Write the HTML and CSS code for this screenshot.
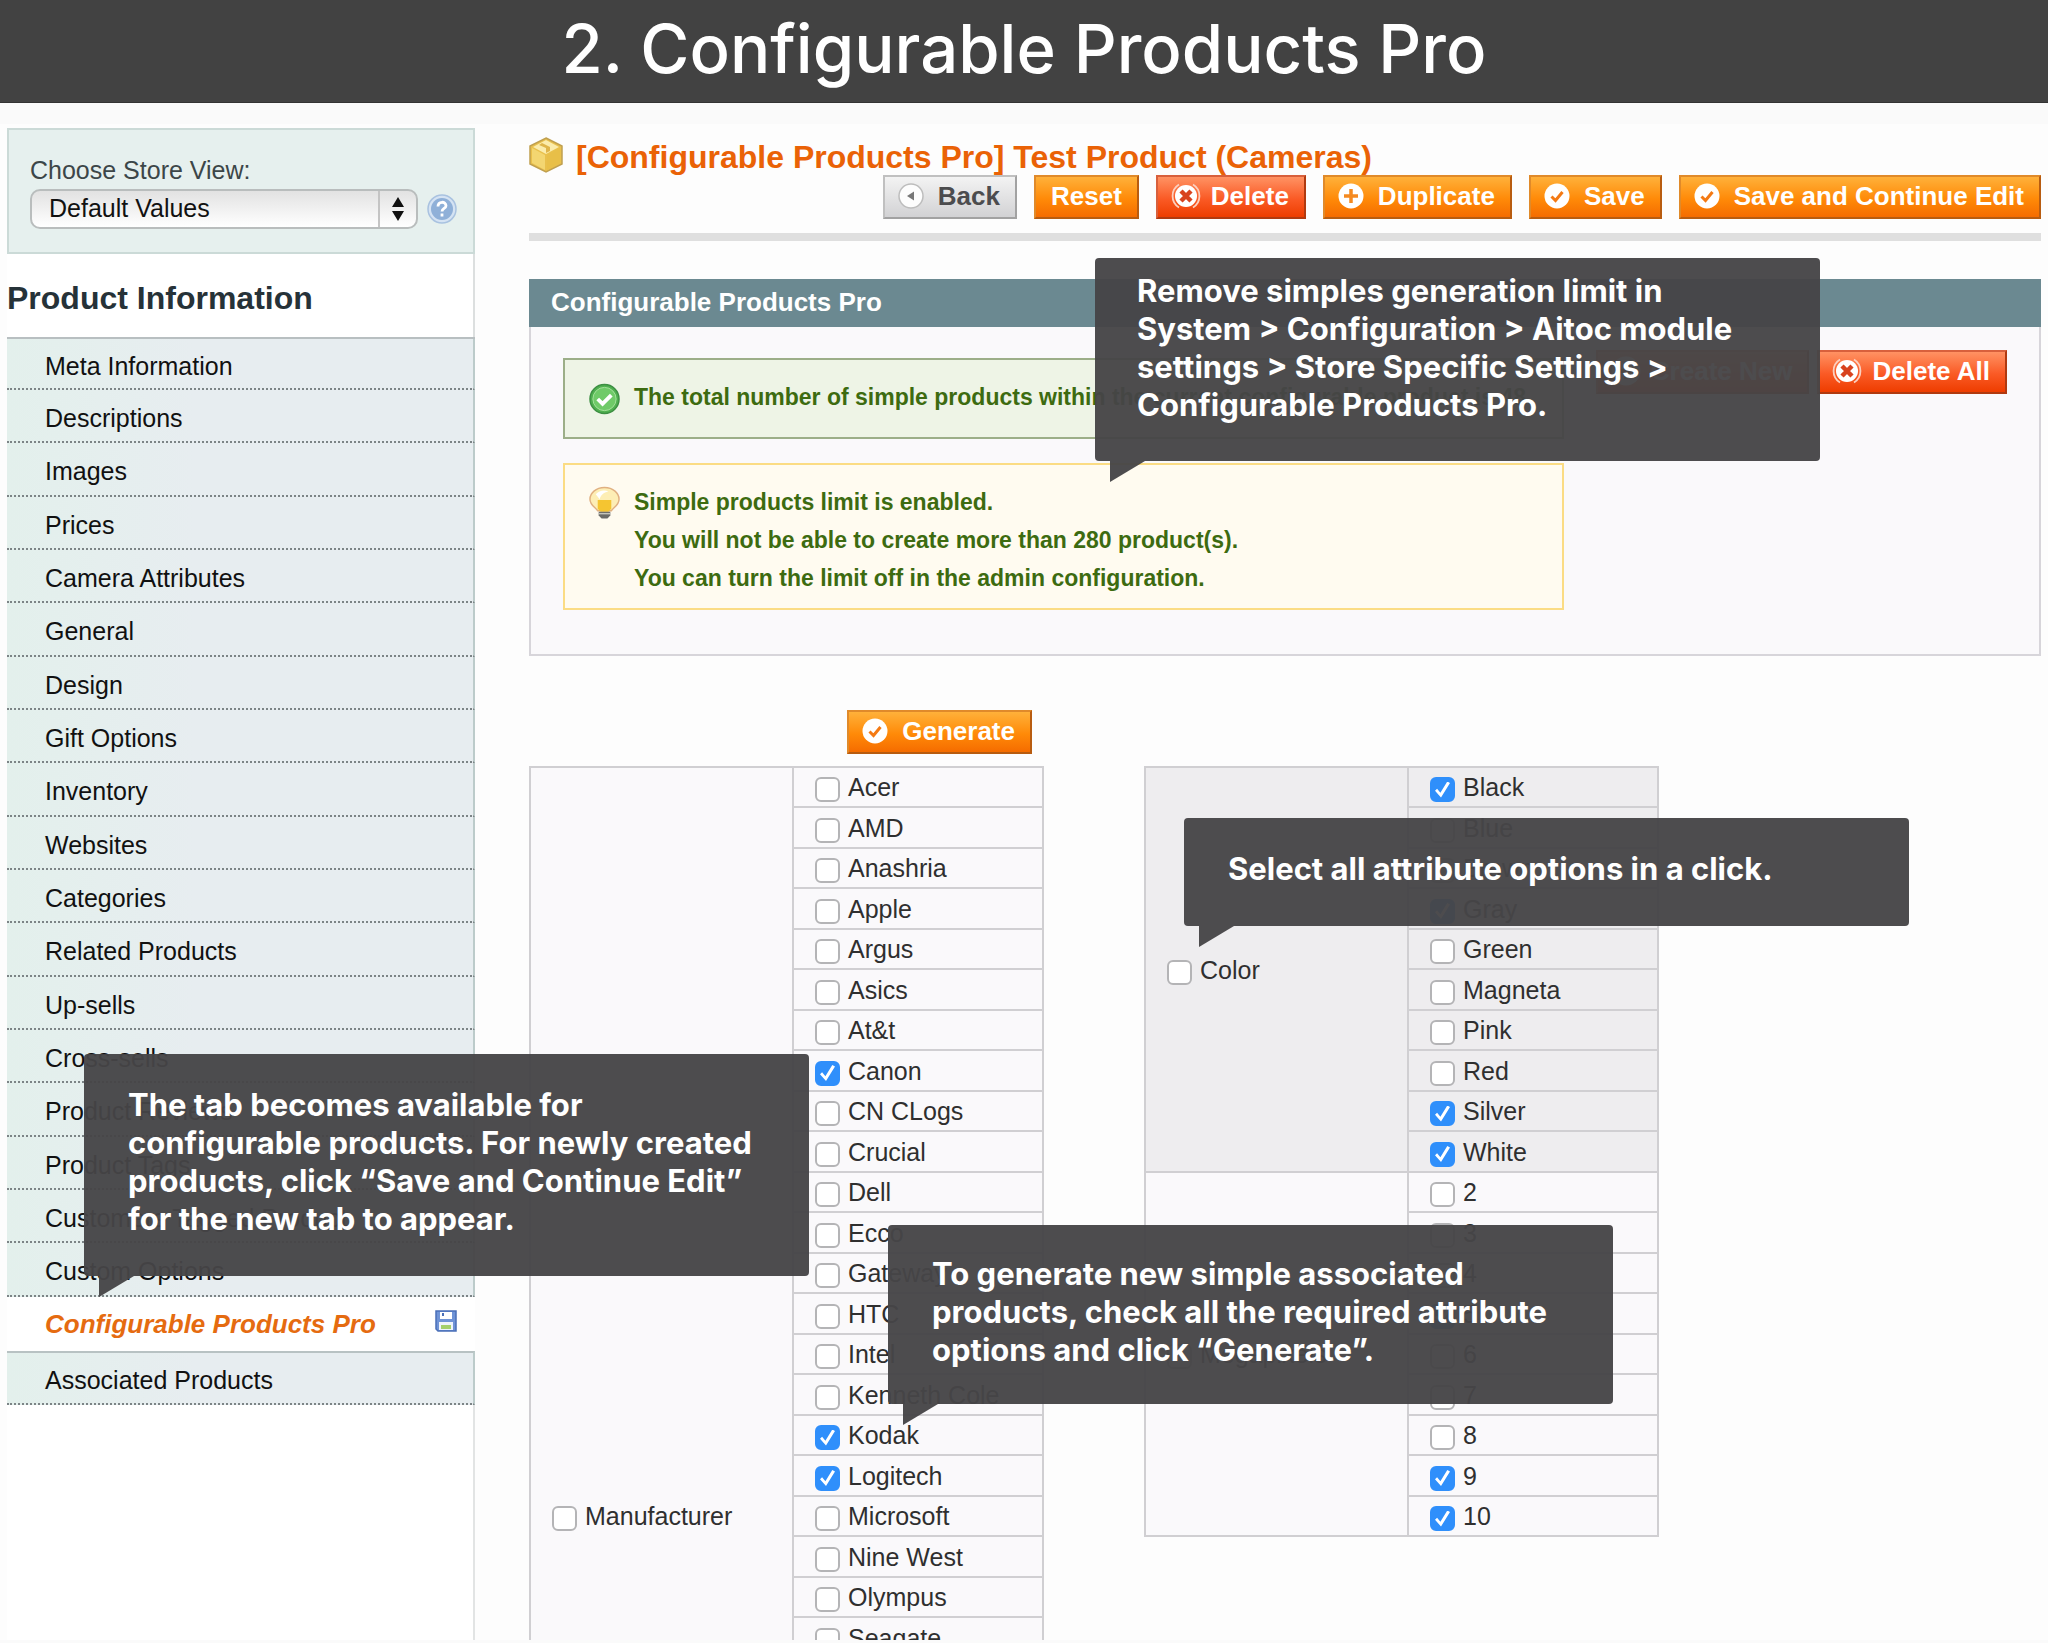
FILE: index.html
```html
<!DOCTYPE html>
<html lang="en">
<head>
<meta charset="utf-8">
<title>Configurable Products Pro</title>
<link rel="stylesheet" href="styles.css">
</head>
<body>
<svg class="sprite" width="0" height="0" aria-hidden="true">
  <symbol id="i-check" viewBox="0 0 26 26"><circle cx="13" cy="13" r="12.5" fill="#fff"/><path d="M7.5 13.5l4 4 7-8.500" fill="none" stroke="#f47a14" stroke-width="3"/></symbol>
  <symbol id="i-plus" viewBox="0 0 26 26"><circle cx="13" cy="13" r="12.5" fill="#fff"/><path d="M13 6v14M6 13h14" fill="none" stroke="#f58a20" stroke-width="3.500"/></symbol>
  <symbol id="i-back" viewBox="0 0 26 26"><circle cx="13" cy="13" r="12" fill="#fdfdfd" stroke="#bdbdbd" stroke-width="1.500"/><path d="M16 8.500v9L9 13z" fill="#777"/></symbol>
  <symbol id="i-cross" viewBox="0 0 30 30"><path d="M8 3.500a13.500 13.500 0 0 0 0 23M22 3.500a13.500 13.500 0 0 1 0 23" fill="none" stroke="#fbd0c0" stroke-width="1.800"/><circle cx="15" cy="15" r="11" fill="#fff"/><path d="M10 10l10 10M20 10L10 20" stroke="#d8431f" stroke-width="4.500"/></symbol>
</svg>

<header class="banner"><h1>2. Configurable Products Pro</h1></header>

<div class="screen">
  <aside class="sidebar">
    <div class="store">
      <label for="store">Choose Store View:</label>
      <div class="store-row">
        <span class="picker">
          <select id="store"><option>Default Values</option></select>
          <svg class="picker-arrows" viewBox="0 0 12 24" aria-hidden="true"><path d="M6 0l6 10H0zM6 24L0 14h12z" fill="#111"/></svg>
        </span>
        <a class="help" href="#" aria-label="Help"><svg viewBox="0 0 30 30"><circle cx="15" cy="15" r="14" fill="#d5e3f3" stroke="#a9c2e0" stroke-width="1.500"/><circle cx="15" cy="15" r="11" fill="#8fb0d8"/><path d="M11 12.500c0-5.500 8-5.500 8-.800 0 2.800-4 2.800-4 5.800M15 19.500v3" fill="none" stroke="#fff" stroke-width="2.800"/></svg></a>
      </div>
    </div>
    <h2>Product Information</h2>
    <nav>
      <ul>
        <li><a href="#">Meta Information</a></li>
        <li><a href="#">Descriptions</a></li>
        <li><a href="#">Images</a></li>
        <li><a href="#">Prices</a></li>
        <li><a href="#">Camera Attributes</a></li>
        <li><a href="#">General</a></li>
        <li><a href="#">Design</a></li>
        <li><a href="#">Gift Options</a></li>
        <li><a href="#">Inventory</a></li>
        <li><a href="#">Websites</a></li>
        <li><a href="#">Categories</a></li>
        <li><a href="#">Related Products</a></li>
        <li><a href="#">Up-sells</a></li>
        <li><a href="#">Cross-sells</a></li>
        <li><a href="#">Product Reviews</a></li>
        <li><a href="#">Product Tags</a></li>
        <li><a href="#">Customers Tagged Product</a></li>
        <li><a href="#">Custom Options</a></li>
        <li class="active"><a href="#">Configurable Products Pro</a>
          <svg class="disk" viewBox="0 0 22 22" aria-hidden="true"><path d="M1 1h20v20H3l-2-2z" fill="#6f93d6" stroke="#4a6fb8" stroke-width="1.500"/><path d="M5 2h12v7H5z" fill="#fff"/><path d="M7 3h2v3H7z" fill="#4a6fb8"/><path d="M4 12h14v8H4z" fill="#eef3fb"/><path d="M6 15h10v4H6z" fill="#a4cf6a"/></svg>
        </li>
        <li class="after"><a href="#">Associated Products</a></li>
      </ul>
    </nav>
    <div class="rest"></div>
  </aside>

  <main class="content">
    <div class="title">
      <svg viewBox="0 0 34 36" aria-hidden="true"><path d="M17 1l16 8v18l-16 8-16-8V9z" fill="#e9c04c" stroke="#c0a050" stroke-width="1.500"/><path d="M17 3l13 7-13 7L4 10z" fill="#fbecac"/><path d="M3 11l13 7v15L3 26z" fill="#f3d671"/><path d="M18 18l13-7v15l-13 7z" fill="#e8bf48"/><path d="M13 6l8 4v4l-4 2v-5l-7-3z" fill="#dfb54a"/></svg>
      <h2>[Configurable Products Pro] Test Product (Cameras)</h2>
    </div>
    <div class="actions">
      <button type="button" class="btn plain"><svg><use href="#i-back"/></svg>Back</button>
      <button type="button" class="btn">Reset</button>
      <button type="button" class="btn danger"><svg><use href="#i-cross"/></svg>Delete</button>
      <button type="button" class="btn"><svg><use href="#i-plus"/></svg>Duplicate</button>
      <button type="button" class="btn"><svg><use href="#i-check"/></svg>Save</button>
      <button type="button" class="btn"><svg><use href="#i-check"/></svg>Save and Continue Edit</button>
    </div>

    <section class="panel">
      <h3>Configurable Products Pro</h3>
      <div class="panel-body">
        <div class="messages">
          <div class="msg ok">
            <svg viewBox="0 0 32 32" aria-hidden="true"><circle cx="16" cy="16" r="15" fill="#4fb04f" stroke="#3d8f43" stroke-width="1.500"/><circle cx="16" cy="16" r="12" fill="#6fca68" stroke="#a5e09c"/><path d="M9 16l5 5 9-9" fill="none" stroke="#fff" stroke-width="4"/></svg>
            <p>The total number of simple products within the current configurable product is 48</p>
          </div>
          <div class="msg note">
            <svg viewBox="0 0 32 34" aria-hidden="true"><path d="M16 1c9 0 15 6 15 12 0 6-5 8-8 12H9C6 21 1 19 1 13 1 7 7 1 16 1z" fill="#fdeeb5" stroke="#e0b080" stroke-width="1.500"/><path d="M9 14h14v9l-3 3h-8l-3-3z" fill="#f5c531"/><path d="M7 8c3-4 9-5 13-3-5 1-8 4-9 8z" fill="#fff"/><path d="M10 26h12v4l-3 3h-6l-3-3z" fill="#6a6a66"/><path d="M10 28h12" stroke="#c4c4bc" stroke-width="1.500"/></svg>
            <p>Simple products limit is enabled.<br>You will not be able to create more than 280 product(s).<br>You can turn the limit off in the admin configuration.</p>
          </div>
        </div>
        <div class="panel-actions">
          <button type="button" class="btn danger"><svg><use href="#i-plus"/></svg>Create New</button>
          <button type="button" class="btn danger"><svg><use href="#i-cross"/></svg>Delete All</button>
        </div>
      </div>
    </section>

    <div class="generate"><button type="button" class="btn"><svg><use href="#i-check"/></svg>Generate</button></div>

    <div class="tables">
      <table>
        <tbody>
          <tr><th rowspan="22" class="low"><label><input type="checkbox">Manufacturer</label></th><td><label><input type="checkbox">Acer</label></td></tr>
          <tr><td><label><input type="checkbox">AMD</label></td></tr>
          <tr><td><label><input type="checkbox">Anashria</label></td></tr>
          <tr><td><label><input type="checkbox">Apple</label></td></tr>
          <tr><td><label><input type="checkbox">Argus</label></td></tr>
          <tr><td><label><input type="checkbox">Asics</label></td></tr>
          <tr><td><label><input type="checkbox">At&amp;t</label></td></tr>
          <tr><td><label><input type="checkbox" checked>Canon</label></td></tr>
          <tr><td><label><input type="checkbox">CN CLogs</label></td></tr>
          <tr><td><label><input type="checkbox">Crucial</label></td></tr>
          <tr><td><label><input type="checkbox">Dell</label></td></tr>
          <tr><td><label><input type="checkbox">Ecco</label></td></tr>
          <tr><td><label><input type="checkbox">Gateway</label></td></tr>
          <tr><td><label><input type="checkbox">HTC</label></td></tr>
          <tr><td><label><input type="checkbox">Intel</label></td></tr>
          <tr><td><label><input type="checkbox">Kenneth Cole</label></td></tr>
          <tr><td><label><input type="checkbox" checked>Kodak</label></td></tr>
          <tr><td><label><input type="checkbox" checked>Logitech</label></td></tr>
          <tr><td><label><input type="checkbox">Microsoft</label></td></tr>
          <tr><td><label><input type="checkbox">Nine West</label></td></tr>
          <tr><td><label><input type="checkbox">Olympus</label></td></tr>
          <tr><td><label><input type="checkbox">Seagate</label></td></tr>
        </tbody>
      </table>
      <table>
        <tbody class="shade">
          <tr><th rowspan="10"><label><input type="checkbox">Color</label></th><td><label><input type="checkbox" checked>Black</label></td></tr>
          <tr><td><label><input type="checkbox">Blue</label></td></tr>
          <tr><td><label><input type="checkbox">Brown</label></td></tr>
          <tr><td><label><input type="checkbox" checked>Gray</label></td></tr>
          <tr><td><label><input type="checkbox">Green</label></td></tr>
          <tr><td><label><input type="checkbox">Magneta</label></td></tr>
          <tr><td><label><input type="checkbox">Pink</label></td></tr>
          <tr><td><label><input type="checkbox">Red</label></td></tr>
          <tr><td><label><input type="checkbox" checked>Silver</label></td></tr>
          <tr><td><label><input type="checkbox" checked>White</label></td></tr>
        </tbody>
        <tbody>
          <tr><th rowspan="9"><label><input type="checkbox">Megapixels</label></th><td><label><input type="checkbox">2</label></td></tr>
          <tr><td><label><input type="checkbox">3</label></td></tr>
          <tr><td><label><input type="checkbox">4</label></td></tr>
          <tr><td><label><input type="checkbox" checked>5</label></td></tr>
          <tr><td><label><input type="checkbox">6</label></td></tr>
          <tr><td><label><input type="checkbox">7</label></td></tr>
          <tr><td><label><input type="checkbox">8</label></td></tr>
          <tr><td><label><input type="checkbox" checked>9</label></td></tr>
          <tr><td><label><input type="checkbox" checked>10</label></td></tr>
        </tbody>
      </table>
    </div>
  </main>

  <div class="callout limit">Remove simples generation limit in<br>System &gt; Configuration &gt; Aitoc module<br>settings &gt; Store Specific Settings &gt;<br>Configurable Products Pro.</div>
  <div class="callout select-all">Select all attribute options in a click.</div>
  <div class="callout tab">The tab becomes available for<br>configurable products. For newly created<br>products, click “Save and Continue Edit”<br>for the new tab to appear.</div>
  <div class="callout gen">To generate new simple associated<br>products, check all the required attribute<br>options and click “Generate”.</div>
</div>
</body>
</html>
```
FILE: styles.css
```css
* { box-sizing: border-box; }
body {
  margin: 0;
  height: 100vh;
  display: flex;
  flex-direction: column;
  background: #fafafa;
  color: #2f2f2f;
  font: 25px/30px "Liberation Sans", Arial, sans-serif;
}
h1, h2, h3, p, ul { margin: 0; padding: 0; }
a { color: inherit; text-decoration: none; }
.sprite { position: absolute; }

.banner {
  flex: none;
  padding: 9px 0 13px;
  background: #424242;
  border-bottom: 1px solid #333;
  color: #fff;
  text-align: center;
}
.banner h1 { font: 500 67px/80px Inter, sans-serif; }

.screen {
  position: relative;
  flex: 1;
  min-height: 0;
  display: flex;
  margin: 21px 0 3px;
  padding: 0 7px;
  background: #fdfdfd;
  overflow: hidden;
}

/* Sidebar */
.sidebar {
  flex: none;
  width: 468px;
  display: flex;
  flex-direction: column;
  padding-top: 4px;
}
.store {
  padding: 25px 16px 23px 21px;
  background: #e6f0ee;
  border: 2px solid #cbdad7;
}
.store label { display: block; color: #3c4648; }
.store-row { display: flex; align-items: center; gap: 9px; margin-top: 4px; }
.picker { position: relative; width: 388px; height: 40px; }
.picker select {
  appearance: none;
  width: 100%;
  height: 40px;
  padding: 0 50px 2px 17px;
  border: 2px solid #b9bdbd;
  border-radius: 10px;
  background: linear-gradient(90deg, transparent 346px, #c4c4c4 346px, #c4c4c4 348px, transparent 348px), linear-gradient(#e2e2e2, #fff);
  color: #111;
  font: inherit;
}
.picker-arrows { position: absolute; right: 14px; top: 8px; width: 12px; height: 24px; }
.help, .help svg { display: block; width: 30px; height: 30px; }
.sidebar h2 {
  padding: 29px 0 24px;
  background: #fff;
  border-right: 2px solid #dcdfdf;
  color: #263238;
  font-size: 32px;
  line-height: 30px;
}
.sidebar ul { list-style: none; border-top: 2px solid #b8bfc1; }
.sidebar li {
  display: flex;
  align-items: center;
  height: 53px;
  padding: 4px 18px 0 38px;
  background: linear-gradient(90deg, #e3f0ec, #e7edf0 40%);
  border-right: 2px solid #bccbca;
  border-bottom: 2px dotted #7c8486;
  color: #111;
}
.sidebar li:first-child { height: 51px; }
.sidebar li:nth-child(3n) { height: 54px; }
.sidebar li.active {
  height: 54px;
  padding-top: 0;
  justify-content: space-between;
  background: #fff;
  border: 0;
  color: #e56b10;
  font: italic bold 26px/30px "Liberation Sans", Arial, sans-serif;
}
.sidebar li.after { height: 54px; border-top: 2px solid #b8c2c3; }
.disk { width: 22px; height: 22px; margin-bottom: 6px; }
.rest { flex: 1; background: #fff; border-right: 2px solid #e2e4e4; }

/* Page head */
.content { flex: 1; min-width: 0; padding: 14px 0 0 54px; }
.title { display: flex; align-items: center; gap: 13px; height: 37px; color: #ea6206; }
.title h2 { font-size: 32px; line-height: 38px; }
.title svg { width: 34px; height: 36px; margin-bottom: 4px; }
.actions {
  display: flex;
  justify-content: flex-end;
  gap: 17px;
  padding-bottom: 14px;
  border-bottom: 8px solid #dfdfdf;
}
.btn {
  display: inline-flex;
  align-items: center;
  gap: 14px;
  height: 44px;
  padding: 0 15px 2px;
  border: 2px solid;
  border-color: #e08a2a #b85c10 #b85c10 #e08a2a;
  background: linear-gradient(#ffb13a, #ff8a08 55%, #f56c00);
  color: #fff;
  font: bold 26px/30px "Liberation Sans", Arial, sans-serif;
  white-space: nowrap;
}
.btn svg { width: 26px; height: 26px; margin-left: -2px; }
.btn.plain {
  border-color: #c0c0c0 #a2a2a2 #a2a2a2 #c0c0c0;
  background: linear-gradient(#f3f3f3, #d2d2d4);
  color: #4c4c4e;
}
.btn.danger {
  gap: 10px;
  border-color: #d8603c #b03a10 #b03a10 #d8603c;
  background: linear-gradient(#ff9263, #fa5a25 55%, #ee3d00);
}
.btn.danger svg { width: 30px; height: 30px; }

/* Panel */
.panel { margin-top: 38px; background: #faf9fb; }
.panel h3 {
  padding: 8px 22px 10px;
  background: #6b8991;
  color: #fff;
  font-size: 26px;
  line-height: 30px;
}
.panel-body {
  display: flex;
  align-items: flex-start;
  gap: 32px;
  padding: 23px 32px 44px;
  border: 2px solid #d7d5da;
  border-top: 0;
}
.messages { flex: 1; min-width: 0; padding-top: 8px; }
.msg {
  display: flex;
  gap: 14px;
  padding: 18px 24px 11px;
  border: 2px solid;
  color: #3d6b10;
  font-weight: bold;
  font-size: 23px;
  line-height: 38px;
  white-space: nowrap;
}
.msg svg { flex: none; width: 31px; height: 34px; margin-top: 3px; }
.msg.ok { align-items: center; padding: 18px 24px 21px; background: #eef4e6; border-color: #9cae88; }
.msg.note { margin-top: 24px; background: #fffbf0; border-color: #fbdc84; }
.panel-actions { flex: none; display: flex; gap: 8px; }

/* Attribute tables */
.generate { width: 515px; margin-top: 54px; padding: 0 12px 12px 0; display: flex; justify-content: flex-end; }
.tables { display: flex; align-items: flex-start; gap: 100px; }
table {
  width: 515px;
  table-layout: fixed;
  border-collapse: collapse;
  background: #faf9fb;
}
.shade { background: #eeedef; }
tr { height: 40px; }
tr:nth-child(even) { height: 41px; }
th, td { padding: 0 0 0 21px; border: 2px solid #d0cfd2; font-weight: normal; text-align: left; }
th { width: 263px; }
th.low { padding-bottom: 126px; vertical-align: bottom; }
td label, th label { display: flex; align-items: center; gap: 8px; height: 30px; }
input[type="checkbox"] {
  appearance: none;
  flex: none;
  display: grid;
  place-items: center;
  width: 25px;
  height: 25px;
  margin: 5px 0 0;
  border: 2px solid #b4b4b6;
  border-radius: 6px;
  background: #fff;
}
input[type="checkbox"]:checked { border-color: #2f8ffb; background: #2f8ffb; }
input[type="checkbox"]:checked::before {
  content: "";
  width: 15px;
  height: 16px;
  background: #fff;
  clip-path: polygon(0 58%, 14% 46%, 36% 70%, 82% 0, 100% 10%, 40% 100%);
}

/* Callouts float over the page */
.callout {
  position: absolute;
  width: 725px;
  padding: 32px 20px 38px 44px;
  border-radius: 4px;
  background: rgba(70, 69, 71, .96);
  color: #fff;
  font: 700 31px/38px Inter, sans-serif;
  white-space: nowrap;
}
.callout::after {
  content: "";
  position: absolute;
  left: 15px;
  top: 100%;
  width: 35px;
  height: 21px;
  background: inherit;
  clip-path: polygon(0 0, 100% 0, 0 100%);
}
.limit { left: 1095px; top: 134px; padding: 14px 20px 37px 42px; }
.select-all { left: 1184px; top: 694px; }
.tab { left: 84px; top: 930px; }
.gen { left: 888px; top: 1101px; padding-top: 30px; padding-bottom: 35px; }
```
